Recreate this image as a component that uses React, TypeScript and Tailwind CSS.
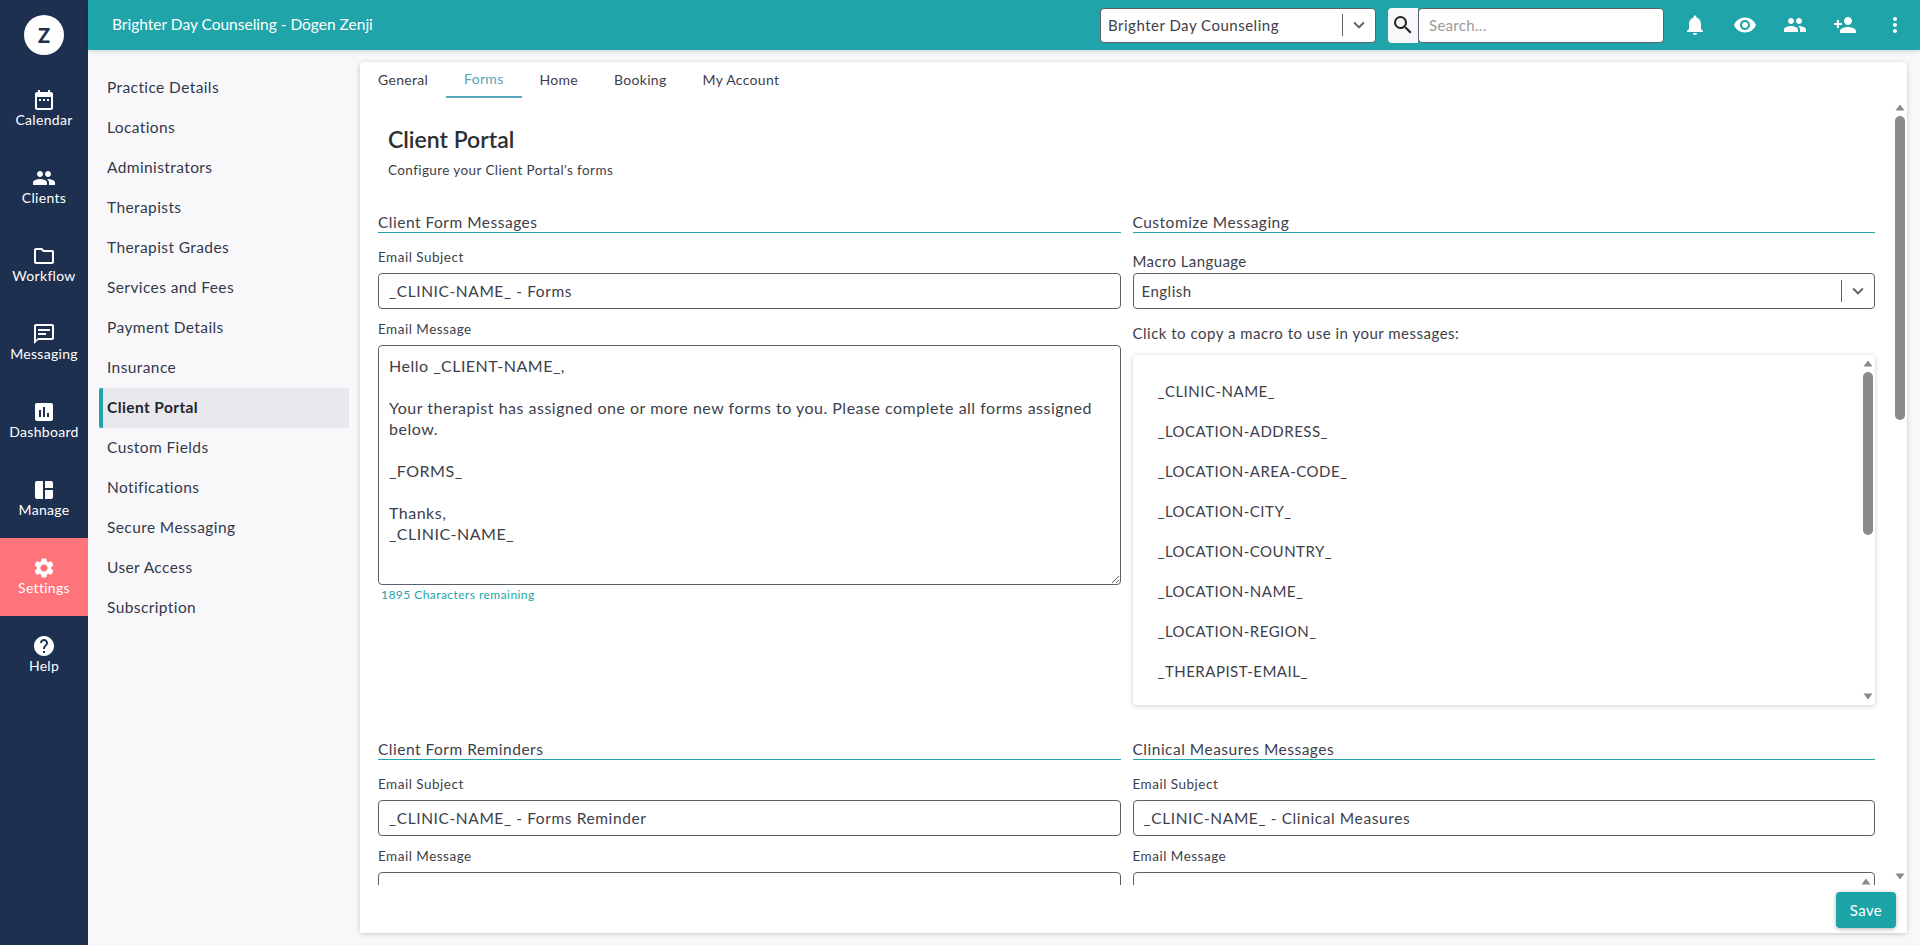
import React from "react";
import {
  MdDateRange, MdPeople, MdOutlineFolder, MdAssessment, MdSpaceDashboard,
  MdSettings, MdHelp, MdNotifications, MdVisibility, MdPersonAdd, MdMoreVert, MdSearch, MdKeyboardArrowDown,
} from "react-icons/md";

function MessageIcon({ size, color }: { size: number; color: string }) {
  return (
    <svg width={size} height={size} viewBox="0 0 24 24" fill={color}>
      <path d="M20 2H4c-1.1 0-2 .9-2 2v18l4-4h14c1.1 0 2-.9 2-2V4c0-1.1-.9-2-2-2zm0 14H6l-2 2V4h16v12z" />
      <path d="M6 7h12v2H6zM6 11h8v2H6z" />
    </svg>
  );
}

const rail = [
  { label: "Calendar", Icon: MdDateRange },
  { label: "Clients", Icon: MdPeople },
  { label: "Workflow", Icon: MdOutlineFolder },
  { label: "Messaging", Icon: MessageIcon },
  { label: "Dashboard", Icon: MdAssessment },
  { label: "Manage", Icon: MdSpaceDashboard },
  { label: "Settings", Icon: MdSettings, active: true },
  { label: "Help", Icon: MdHelp },
];
const side = ["Practice Details", "Locations", "Administrators", "Therapists", "Therapist Grades", "Services and Fees", "Payment Details", "Insurance", "Client Portal", "Custom Fields", "Notifications", "Secure Messaging", "User Access", "Subscription"];
const tabs = ["General", "Forms", "Home", "Booking", "My Account"];
const macros = ["_CLINIC-NAME_", "_LOCATION-ADDRESS_", "_LOCATION-AREA-CODE_", "_LOCATION-CITY_", "_LOCATION-COUNTRY_", "_LOCATION-NAME_", "_LOCATION-REGION_", "_THERAPIST-EMAIL_"];

function Up() {
  return <svg width="10" height="7" viewBox="0 0 10 7" className="shrink-0"><path d="M5 0.5 9.5 6.5H0.5Z" fill="#8a8a8a" /></svg>;
}
function Down() {
  return <svg width="10" height="7" viewBox="0 0 10 7" className="shrink-0"><path d="M5 6.5 9.5 0.5H0.5Z" fill="#8a8a8a" /></svg>;
}

function Section({ children }: { children: React.ReactNode }) {
  return <div className="h-[20px] border-b border-[#1ea4a9] text-[15.5px] leading-[19px] tracking-[0.5px] text-[#3d4049]">{children}</div>;
}
function Label({ children }: { children: React.ReactNode }) {
  return <div className="mt-[16px] mb-[8px] h-[16px] text-[13.5px] leading-[16px] tracking-[0.5px] text-[#3d4049]">{children}</div>;
}
function Label2({ children }: { children: React.ReactNode }) {
  return <div className="mt-[12px] mb-[8px] h-[16px] text-[13.5px] leading-[16px] tracking-[0.5px] text-[#3d4049]">{children}</div>;
}
function Field({ value }: { value: string }) {
  return <input readOnly value={value} className="block h-[36px] w-full rounded-[4px] border border-[#5c606b] bg-white px-[10px] text-[15.5px] tracking-[0.6px] text-[#3d4049] outline-none" />;
}

const message = `Hello _CLIENT-NAME_,

Your therapist has assigned one or more new forms to you. Please complete all forms assigned below.

_FORMS_

Thanks,
_CLINIC-NAME_`;

export default function App() {
  return (
    <div className="flex h-[945px] w-[1920px] overflow-hidden bg-[#f8f8fb] font-['Lato','Liberation_Sans',sans-serif] text-[#33394a]">
      <nav className="flex w-[88px] shrink-0 flex-col items-stretch bg-[#1e3050] text-white">
        <div className="flex h-[70px] items-center justify-center">
          <div className="flex h-[40px] w-[40px] items-center justify-center rounded-full bg-white text-[20px] font-black text-[#1e3050]">Z</div>
        </div>
        {rail.map(({ label, Icon, active }) => (
          <div key={label} className={`flex h-[78px] flex-col items-center pt-[18px] ${active ? "bg-[#ff737a]" : ""}`}>
            <Icon size={24} color="#ffffff" />
            <span className="-mt-[1px] text-[14px] leading-[18px] tracking-[0.3px]">{label}</span>
          </div>
        ))}
      </nav>

      <div className="flex min-w-0 flex-1 flex-col">
        <header className="relative z-10 flex h-[50px] shrink-0 items-center bg-[#1ea4a9] shadow-[0_2px_4px_rgba(0,0,0,0.12)]">
          <div className="ml-[24px] flex-1 text-[15.5px] text-white">Brighter Day Counseling - Dōgen Zenji</div>
          <div className="flex h-[35px] w-[276px] items-center rounded-[4px] border border-[#5c606b] bg-white pl-[7px] text-[15px] tracking-[0.5px] text-[#3d4049]">
            <span className="flex-1">Brighter Day Counseling</span>
            <span className="h-[22px] w-px bg-[#5c606b]" />
            <MdKeyboardArrowDown size={22} color="#5c606b" className="mx-[5px]" />
          </div>
          <div className="ml-[12px] flex h-[35px] w-[30px] items-center justify-center rounded-l-[4px] bg-[#f8f8fb]">
            <MdSearch size={24} color="#222222" />
          </div>
          <div className="flex h-[35px] w-[246px] items-center rounded-[4px] border border-[#5c606b] bg-white pl-[10px] text-[15px] tracking-[0.3px] text-[#9a9a9a]">Search...</div>
          <div className="ml-[19px] mr-[13px] flex items-center gap-[26px] text-white">
            <MdNotifications size={24} />
            <MdVisibility size={24} />
            <MdPeople size={24} />
            <MdPersonAdd size={24} />
            <MdMoreVert size={24} />
          </div>
        </header>

        <div className="flex min-h-0 flex-1">
          <aside className="w-[272px] shrink-0 pl-[11px] pt-[18px]">
            {side.map((s) => {
              const on = s === "Client Portal";
              return (
                <div key={s} className={`flex h-[40px] w-[250px] items-center rounded-[2px] border-l-[4px] pl-[4px] text-[15.5px] tracking-[0.4px] ${on ? "border-[#1ea4a9] bg-[#e8e8ed] font-bold text-[#23262f]" : "border-transparent"}`}>{s}</div>
              );
            })}
          </aside>

          <main className="mt-[12px] mb-[12px] flex w-[1547px] flex-col rounded-[4px] bg-white shadow-[0_1px_5px_rgba(0,0,0,0.2)]">
            <div className="flex h-[36px] shrink-0">
              {tabs.map((t) => (
                <div key={t} className={`flex h-[36px] items-center px-[18px] pb-[2px] text-[14px] tracking-[0.3px] ${t === "Forms" ? "border-b-2 border-[#5ba3bb] text-[#5ba3bb]" : "text-[#3d4049]"}`}>{t}</div>
              ))}
            </div>
            <div className="flex min-h-0 flex-1">
              <div className="min-w-0 flex-1 overflow-hidden px-[18px]">
                <h1 className="mt-[26px] ml-[10px] text-[23px] leading-[30px] font-semibold text-[#2e2f33]">Client Portal</h1>
                <p className="mt-[7px] ml-[10px] text-[13.5px] leading-[18px] tracking-[0.4px] text-[#3d4049]">Configure your Client Portal's forms</p>
                <div className="mt-[34px] grid grid-cols-2 gap-x-[12px] gap-y-[35px]">
                  <div>
                    <Section>Client Form Messages</Section>
                    <Label>Email Subject</Label>
                    <Field value="_CLINIC-NAME_ - Forms" />
                    <Label2>Email Message</Label2>
                    <textarea readOnly defaultValue={message} className="block h-[240px] w-full rounded-[4px] border border-[#5c606b] bg-white px-[10px] py-[9px] text-[16px] leading-[21px] tracking-[0.5px] text-[#3d4049] outline-none" />
                    <div className="mt-[2px] ml-[3px] text-[12px] leading-[16px] tracking-[0.45px] text-[#1ea4a9]">1895 Characters remaining</div>
                  </div>
                  <div>
                    <Section>Customize Messaging</Section>
                    <div className="mt-[19px] mb-[3px] h-[18px] text-[15px] leading-[18px] tracking-[0.4px] text-[#3d4049]">Macro Language</div>
                    <div className="flex h-[36px] items-center rounded-[4px] border border-[#5c606b] bg-white pl-[8px] text-[15px] tracking-[0.5px] text-[#3d4049]">
                      <span className="flex-1">English</span>
                      <span className="h-[22px] w-px bg-[#5c606b]" />
                      <MdKeyboardArrowDown size={22} color="#5c606b" className="mx-[5px]" />
                    </div>
                    <div className="mt-[15px] mb-[13px] h-[18px] text-[15px] leading-[18px] tracking-[0.5px] text-[#3d4049]">Click to copy a macro to use in your messages:</div>
                    <div className="flex h-[350px] overflow-hidden rounded-[4px] bg-white shadow-[0_1px_5px_rgba(0,0,0,0.2)]">
                      <div className="min-w-0 flex-1 overflow-hidden pt-[16px] pl-[25px]">
                        {macros.map((m) => (
                          <div key={m} className="flex h-[40px] items-center text-[15px] tracking-[0.5px] text-[#3d4049]">{m}</div>
                        ))}
                      </div>
                      <div className="flex w-[14px] shrink-0 flex-col items-center pt-[5px] pb-[5px]">
                        <Up />
                        <div className="mt-[5px] h-[163px] w-[10px] rounded-[5px] bg-[#8a8a8a]" />
                        <div className="flex-1" />
                        <Down />
                      </div>
                    </div>
                  </div>
                  <div>
                    <Section>Client Form Reminders</Section>
                    <Label>Email Subject</Label>
                    <Field value="_CLINIC-NAME_ - Forms Reminder" />
                    <Label2>Email Message</Label2>
                    <div className="h-[240px] rounded-[4px] border border-[#5c606b]" />
                  </div>
                  <div>
                    <Section>Clinical Measures Messages</Section>
                    <Label>Email Subject</Label>
                    <Field value="_CLINIC-NAME_ - Clinical Measures" />
                    <Label2>Email Message</Label2>
                    <div className="flex h-[240px] justify-end rounded-[4px] border border-[#5c606b] pt-[5px] pr-[3px]">
                      <Up />
                    </div>
                  </div>
                </div>
              </div>
              <div className="flex w-[14px] shrink-0 flex-col items-center pt-[6px] pb-[5px]">
                <Up />
                <div className="mt-[5px] h-[304px] w-[10px] rounded-[5px] bg-[#8a8a8a]" />
                <div className="flex-1" />
                <Down />
              </div>
            </div>
            <div className="relative z-10 flex h-[48px] shrink-0 items-start justify-end bg-white pt-[7px] pr-[11px]">
              <button className="h-[36px] w-[60px] rounded-[4px] bg-[#1ca4a6] text-[15px] tracking-[0.4px] text-white shadow-[0_1px_4px_rgba(0,0,0,0.3)]">Save</button>
            </div>
          </main>
        </div>
      </div>
    </div>
  );
}
